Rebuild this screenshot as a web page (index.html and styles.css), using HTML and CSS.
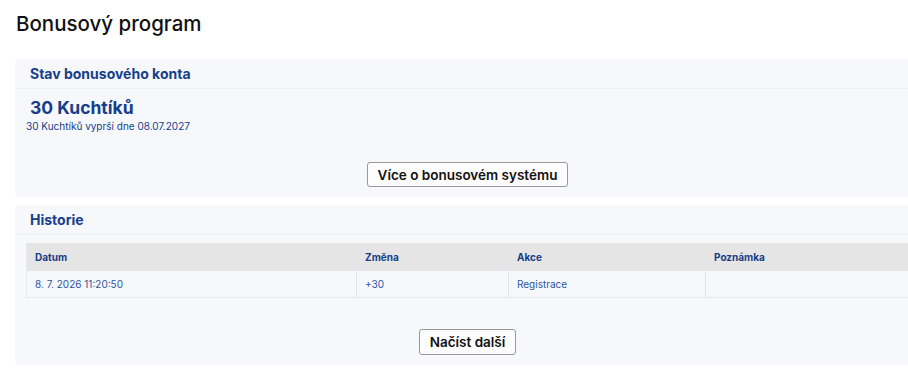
FILE: index.html
```html
<!DOCTYPE html>
<html lang="cs">
<head>
    <meta charset="UTF-8">
    <meta name="viewport" content="width=device-width, initial-scale=1.0">
    <title>Bonusový program</title>
    <link rel="stylesheet" href="styles.css">
</head>
<body>
    <main class="page">
        <h1 class="page-title">Bonusový program</h1>

        <section class="card">
            <h2 class="card-header">Stav bonusového konta</h2>
            <div class="card-body">
                <div class="balance">30 Kuchtíků</div>
                <div class="expiry">30 Kuchtíků vyprší dne 08.07.2027</div>
                <div class="actions">
                    <button class="btn">Více o bonusovém systému</button>
                </div>
            </div>
        </section>

        <section class="card">
            <h2 class="card-header">Historie</h2>
            <div class="card-body">
                <table class="history">
                    <thead>
                        <tr>
                            <th class="col-date">Datum</th>
                            <th class="col-change">Změna</th>
                            <th class="col-action">Akce</th>
                            <th>Poznámka</th>
                        </tr>
                    </thead>
                    <tbody>
                        <tr>
                            <td>8. 7. 2026 11:20:50</td>
                            <td>+30</td>
                            <td>Registrace</td>
                            <td></td>
                        </tr>
                    </tbody>
                </table>
                <div class="actions actions-more">
                    <button class="btn">Načíst další</button>
                </div>
            </div>
        </section>
    </main>
</body>
</html>
```

FILE: styles.css
```css
html, body {
    overflow-x: hidden;
}
body {
    margin: 0;
    background: #ffffff;
    font-family: 'Inter', 'Lato', sans-serif;
    color: #111;
}
.page {
    width: 905px;
    margin-left: 15px;
}
.page-title {
    font-size: 20.5px;
    line-height: 26px;
    font-weight: 500;
    margin: 11px 0 22px 1px;
    color: #111;
}
.card {
    background: #f7f8fc;
    border-radius: 4px;
    margin-bottom: 8px;
}
.card-header {
    margin: 0;
    padding: 0 15px;
    height: 29px;
    line-height: 29px;
    font-size: 14px;
    font-weight: 700;
    color: #163e8a;
    border-bottom: 1px solid #edf0f5;
}
.card-body {
    padding: 0 11px 10px;
}
.balance {
    margin-top: 8px;
    padding-left: 4px;
    font-size: 17.5px;
    line-height: 22px;
    font-weight: 700;
    color: #163e8a;
}
.expiry {
    font-size: 10px;
    line-height: 14px;
    color: #163e8a;
}
.actions {
    display: flex;
    justify-content: center;
    margin-top: 29px;
}
.actions-more {
    margin-top: 31px;
}
.btn {
    font-family: inherit;
    font-size: 13.5px;
    font-weight: 600;
    color: #111;
    background: #fdfdfd;
    border: 1px solid #999;
    border-radius: 3px;
    height: 25px;
    padding: 0 10px;
    cursor: pointer;
}
.actions-more .btn {
    height: 26px;
}
.history {
    width: 100%;
    margin-top: 8px;
    border-collapse: collapse;
    font-size: 10px;
    border-left: 1px solid #e6e8ec;
}
.history th, .history td {
    text-align: left;
    padding: 0 8px;
    border-right: 1px solid #e2e4e8;
}
.history th {
    height: 28px;
    background: #e5e5e5;
    color: #163e8a;
    font-weight: 700;
}
.history td {
    height: 26px;
    color: #2d56a0;
    border-bottom: 1px solid #e6e8ec;
}
.col-date {
    width: 313px;
}
.col-change {
    width: 135px;
}
.col-action {
    width: 180px;
}
```
